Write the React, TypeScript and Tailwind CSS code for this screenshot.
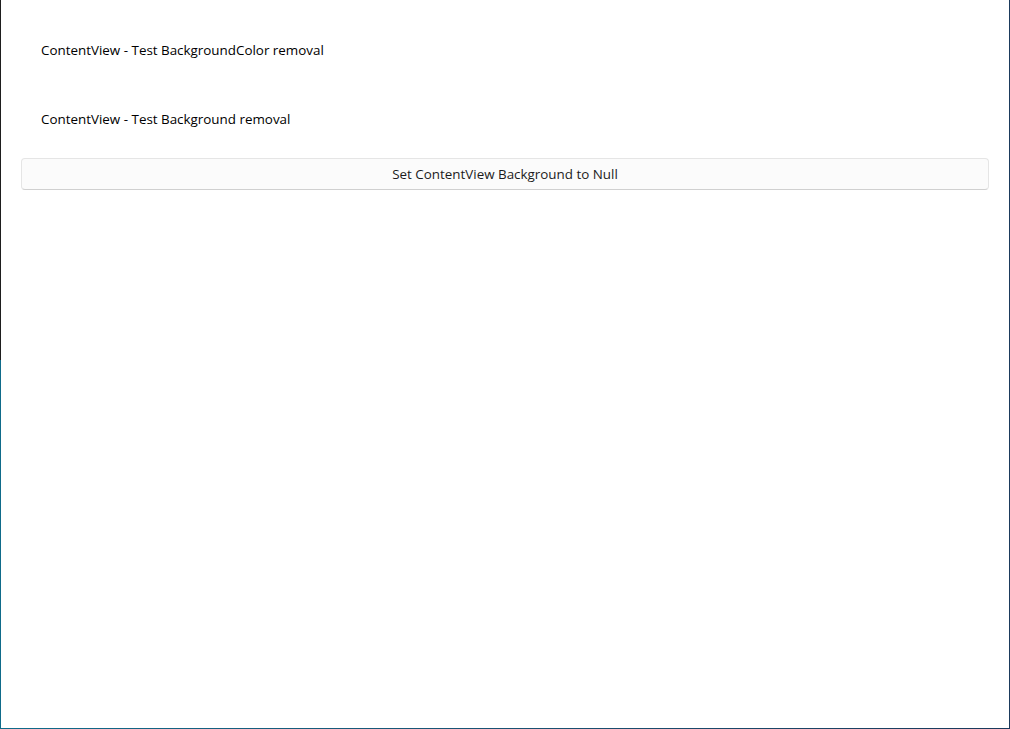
import React from 'react';

export default function App() {
  return (
    <div className="flex h-[729px] w-[1010px] flex-col bg-white" style={{ fontFamily: '"Open Sans", "Noto Sans", sans-serif' }}>
      <div className="flex min-h-0 flex-1">
        {/* window edge, left */}
        <div className="flex w-px flex-col">
          <div className="h-[360px] bg-[#1e1e1e]" />
          <div className="flex-1 bg-[#0f6b8a]" />
        </div>

        <div className="flex flex-1 flex-col px-5 pt-[40px] text-[13.4px] leading-5 text-black">
          <div className="pl-5">ContentView - Test BackgroundColor removal</div>
          <div className="mt-[49px] pl-5">ContentView - Test Background removal</div>
          <button className="mt-[29px] h-8 w-full rounded-[4px] border border-[#e5e5e5] border-b-[#d0d0d0] bg-[#fbfbfb] text-[13.4px] text-[#1b1b1b]">
            Set ContentView Background to Null
          </button>
        </div>

        {/* window edge, right */}
        <div className="w-px bg-[#1b3a5c]" />
      </div>
      <div className="h-px bg-gradient-to-r from-[#0f6b8a] to-[#1b3a5c]" />
    </div>
  );
}
